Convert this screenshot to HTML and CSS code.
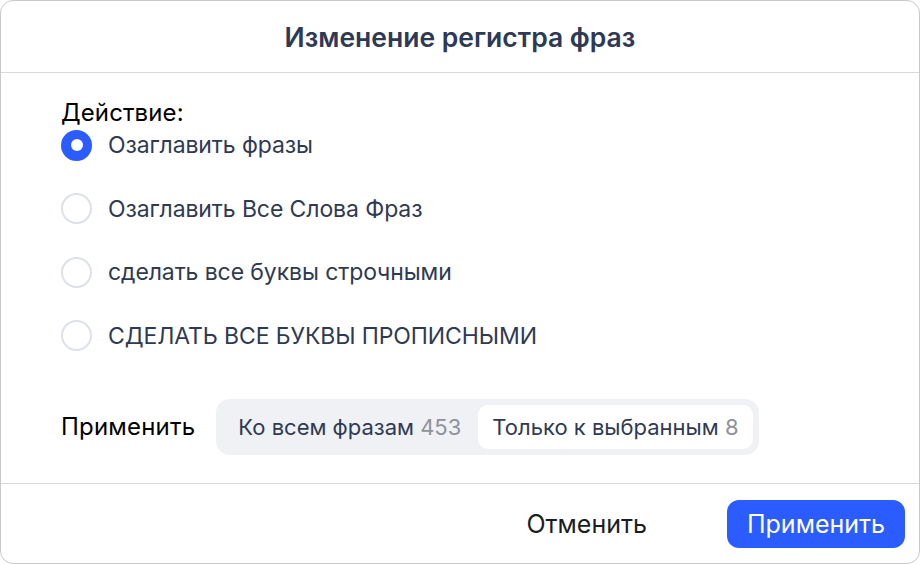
FILE: index.html
```html
<!DOCTYPE html>
<html lang="ru">
<head>
<meta charset="utf-8">
<link rel="stylesheet" href="styles.css">
</head>
<body>
<div class="dialog">
  <header class="header">
    <h1 class="title">Изменение регистра фраз</h1>
  </header>
  <main class="content">
    <div class="group-label">Действие:</div>
    <div class="radios">
      <label class="radio checked"><span class="dot"></span><span class="radio-text">Озаглавить фразы</span></label>
      <label class="radio"><span class="dot"></span><span class="radio-text">Озаглавить Все Слова Фраз</span></label>
      <label class="radio"><span class="dot"></span><span class="radio-text">сделать все буквы строчными</span></label>
      <label class="radio"><span class="dot"></span><span class="radio-text">СДЕЛАТЬ ВСЕ БУКВЫ ПРОПИСНЫМИ</span></label>
    </div>
    <div class="apply-row">
      <span class="apply-label">Применить</span>
      <div class="segment">
        <span class="seg-item">Ко всем фразам <span class="count">453</span></span>
        <span class="seg-item active">Только к выбранным <span class="count">8</span></span>
      </div>
    </div>
  </main>
  <footer class="footer">
    <button class="btn btn-ghost">Отменить</button>
    <button class="btn btn-primary">Применить</button>
  </footer>
</div>
</body>
</html>
```
FILE: styles.css
```css
* { box-sizing: border-box; }
html, body { margin: 0; padding: 0; background: #ffffff; }
body {
  font-family: Inter, "Noto Sans", "Liberation Sans", sans-serif;
  width: 920px;
  height: 564px;
}
.dialog {
  width: 920px;
  height: 564px;
  border: 1px solid #c9c9c9;
  border-radius: 13px;
  display: flex;
  flex-direction: column;
  background: #fff;
}
.header {
  height: 72px;
  border-bottom: 1px solid #d5d9e3;
  display: flex;
  align-items: center;
  justify-content: center;
  flex: none;
}
.title {
  margin: 0;
  font-size: 26.5px;
  font-weight: 600;
  color: #2e3a55;
}
.content {
  flex: 1;
  padding: 28px 0 0 60px;
  display: flex;
  flex-direction: column;
}
.group-label {
  font-size: 24px;
  line-height: 24px;
  color: #000;
  letter-spacing: 0.1px;
}
.radios {
  display: flex;
  flex-direction: column;
  gap: 31.5px;
  margin-top: 4px;
}
.radio {
  display: flex;
  align-items: center;
  height: 32px;
  gap: 16px;
}
.dot {
  width: 31px;
  height: 31px;
  border-radius: 50%;
  border: 2px solid #dde1ea;
  flex: none;
  display: flex;
  align-items: center;
  justify-content: center;
}
.radio.checked .dot {
  border: none;
  background: #2b5cff;
}
.radio.checked .dot::after {
  content: "";
  width: 12px;
  height: 12px;
  border-radius: 50%;
  background: #fff;
}
.radio-text {
  font-size: 23px;
  color: #2f3a52;
  letter-spacing: -0.1px;
}
.apply-row {
  display: flex;
  align-items: center;
  margin-top: 47px;
  gap: 21px;
}
.apply-label {
  font-size: 24px;
  color: #000;
  letter-spacing: 0.2px;
}
.segment {
  display: flex;
  align-items: center;
  background: #eff1f5;
  border-radius: 14px;
  padding: 6px;
  height: 56px;
}
.seg-item {
  height: 44px;
  display: flex;
  align-items: center;
  padding: 0 17px 0 16px;
  border-radius: 10px;
  font-size: 22px;
  color: #2f3a52;
  white-space: pre;
}
.seg-item.active {
  background: #fff;
  padding: 0 14px;
}
.count { color: #8e929b; }
.footer {
  height: 80px;
  border-top: 1px solid #d5d9e3;
  display: flex;
  align-items: flex-start;
  justify-content: flex-end;
  padding: 16px 14px 0 0;
  gap: 60px;
  flex: none;
}
.btn {
  font-family: inherit;
  font-size: 25px;
  height: 48px;
  border: none;
  border-radius: 12px;
  cursor: pointer;
}
.btn-ghost {
  background: transparent;
  color: #1b1d22;
  padding: 0 20px;
}
.btn-primary {
  background: #2b5cff;
  color: #fff;
  width: 178px;
}
```
